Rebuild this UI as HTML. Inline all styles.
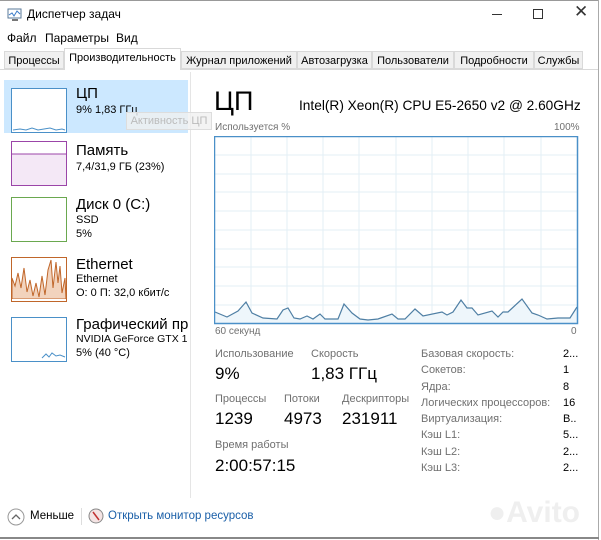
<!DOCTYPE html><html><head><meta charset="utf-8"><style>
body{margin:0;width:601px;height:540px;overflow:hidden;background:#fff;font-family:"Segoe UI","Liberation Sans","DejaVu Sans",sans-serif;color:#000;position:relative}
.a{position:absolute;white-space:nowrap}
.t{position:absolute;top:51px;height:18px;border:1px solid #d9d9d9;background:#f0f0f0;font-size:11px;line-height:18px;text-align:center;box-sizing:border-box}
.g{color:#707070;font-size:11px}
.s{font-size:11px}
.th{position:absolute;left:11px;width:56px;height:43px;background:#fff}
</style></head><body>
<div class="a" style="left:0;top:0;width:598px;height:1px;background:#999"></div>
<div class="a" style="left:598px;top:0;width:1px;height:540px;background:#aaa"></div>
<div class="a" style="left:0;top:537px;width:599px;height:2px;background:#888"></div>
<svg class="a" style="left:7px;top:8px" width="16" height="14"><rect x="1" y="1" width="13" height="9" fill="#fff" stroke="#5a7a9a"/><polyline points="2,7 5,5 7,8 10,3 13,6" fill="none" stroke="#3a7bc8"/><rect x="5" y="11" width="6" height="2" fill="#777"/></svg>
<div class="a" style="left:27px;top:7px;font-size:12px">Диспетчер задач</div>
<div class="a" style="left:492px;top:14px;width:10px;height:1px;background:#333"></div>
<div class="a" style="left:533px;top:9px;width:8px;height:8px;border:1px solid #333"></div>
<div class="a" style="left:574px;top:2px;font-size:17px;color:#333">✕</div>
<div class="a s" style="left:7px;top:31px;font-size:12px">Файл</div>
<div class="a s" style="left:45px;top:31px;font-size:12px">Параметры</div>
<div class="a s" style="left:116px;top:31px;font-size:12px">Вид</div>
<div class="a" style="left:0;top:69px;width:598px;height:1px;background:#d9d9d9"></div>
<div class="t" style="left:4px;width:60px">Процессы</div>
<div class="t" style="left:64px;width:117px;top:48px;height:22px;background:#fff;border-bottom:none">Производительность</div>
<div class="t" style="left:181px;width:116px">Журнал приложений</div>
<div class="t" style="left:297px;width:75px">Автозагрузка</div>
<div class="t" style="left:372px;width:82px">Пользователи</div>
<div class="t" style="left:454px;width:80px">Подробности</div>
<div class="t" style="left:534px;width:49px">Службы</div>
<div class="a" style="left:190px;top:72px;width:1px;height:426px;background:#e5e5e5"></div>
<div class="a" style="left:4px;top:80px;width:184px;height:53px;background:#cce8ff"></div>
<div class="th" style="top:88px;border:1px solid #4a90c8;width:54px"><svg width="54" height="43"><polyline points="1,41 8,40 14,41 20,39 26,41 32,40 38,39 44,41 50,40 53,41" fill="none" stroke="#4a90c8"/></svg></div>
<div class="a" style="left:76px;top:85px;font-size:15px">ЦП</div>
<div class="a s" style="left:76px;top:104px">9% 1,83 ГГц</div>
<div class="a" style="left:126px;top:112px;width:84px;height:16px;background:rgba(240,240,240,.8);border:1px solid #ddd;color:#bbb;font-size:11px;line-height:16px;text-align:center">Активность ЦП</div>
<div class="th" style="top:141px;border:1px solid #9b45a8;width:54px"><svg width="54" height="43"><rect x="0" y="12" width="54" height="31" fill="#f4e8f6"/><line x1="0" y1="12" x2="54" y2="12" stroke="#9b45a8"/></svg></div>
<div class="a" style="left:76px;top:142px;font-size:15px">Память</div>
<div class="a s" style="left:76px;top:161px">7,4/31,9 ГБ (23%)</div>
<div class="th" style="top:197px;border:1px solid #6aa84f;width:54px"></div>
<div class="a" style="left:76px;top:196px;font-size:15px">Диск 0 (C:)</div>
<div class="a s" style="left:76px;top:214px">SSD</div>
<div class="a s" style="left:76px;top:228px">5%</div>
<div class="th" style="top:257px;border:1px solid #c0662a;width:54px"><svg width="54" height="41"><polygon points="0,41 0,20 3,28 6,15 9,30 12,10 15,34 18,22 21,38 24,25 27,39 30,18 33,37 36,12 39,2 41,30 44,4 46,25 48,8 50,35 53,20 54,41" fill="#f2d3bd" stroke="#c0662a"/></svg></div>
<div class="a" style="left:76px;top:256px;font-size:15px">Ethernet</div>
<div class="a s" style="left:76px;top:273px">Ethernet</div>
<div class="a s" style="left:76px;top:287px">О: 0 П: 32,0 кбит/с</div>
<div class="th" style="top:317px;border:1px solid #4a90c8;width:54px"><svg width="54" height="41"><polyline points="30,40 34,36 37,39 40,35 44,38 48,37 53,39" fill="none" stroke="#4a90c8"/></svg></div>
<div class="a" style="left:76px;top:316px;font-size:15px;width:112px;overflow:hidden">Графический про</div>
<div class="a" style="left:76px;top:333px;font-size:10.5px;width:112px;overflow:hidden">NVIDIA GeForce GTX 166</div>
<div class="a s" style="left:76px;top:347px">5% (40 °C)</div>
<div class="a" style="left:214px;top:86px;font-size:27px;line-height:30px">ЦП</div>
<div class="a" style="left:299px;top:98px;font-size:13.7px">Intel(R) Xeon(R) CPU E5-2650 v2 @ 2.60GHz</div>
<div class="a g" style="left:215px;top:122px;font-size:10px">Используется %</div>
<div class="a g" style="left:554px;top:122px;font-size:10px">100%</div>
<svg class="a" style="left:214px;top:136px" width="365" height="189">
<g stroke="#e3eff6" stroke-width="1">
<line x1="37" y1="0" x2="37" y2="188"/><line x1="73" y1="0" x2="73" y2="188"/><line x1="109" y1="0" x2="109" y2="188"/><line x1="145" y1="0" x2="145" y2="188"/><line x1="182" y1="0" x2="182" y2="188"/><line x1="218" y1="0" x2="218" y2="188"/><line x1="254" y1="0" x2="254" y2="188"/><line x1="290" y1="0" x2="290" y2="188"/><line x1="327" y1="0" x2="327" y2="188"/>
<line x1="0" y1="19" x2="364" y2="19"/><line x1="0" y1="38" x2="364" y2="38"/><line x1="0" y1="56" x2="364" y2="56"/><line x1="0" y1="75" x2="364" y2="75"/><line x1="0" y1="94" x2="364" y2="94"/><line x1="0" y1="113" x2="364" y2="113"/><line x1="0" y1="131" x2="364" y2="131"/><line x1="0" y1="150" x2="364" y2="150"/><line x1="0" y1="169" x2="364" y2="169"/>
</g>
<g transform="translate(-214,-136)">
<polygon points="215,323 215,312 227,317 238,311 246,302 252,313 263,318 277,319 283,310 288,308 294,318 300,319 307,316 313,319 320,314 325,319 338,319 344,304 352,313 360,319 368,320 378,319 392,314 398,319 405,319 415,309 423,316 442,312 447,315 453,312 461,300 467,308 472,308 478,315 492,311 498,317 503,312 508,312 522,299 532,313 538,315 547,319 558,318 570,318 577,307 577,323" fill="#eef6fb" stroke="none"/>
<polyline points="215,312 227,317 238,311 246,302 252,313 263,318 277,319 283,310 288,308 294,318 300,319 307,316 313,319 320,314 325,319 338,319 344,304 352,313 360,319 368,320 378,319 392,314 398,319 405,319 415,309 423,316 442,312 447,315 453,312 461,300 467,308 472,308 478,315 492,311 498,317 503,312 508,312 522,299 532,313 538,315 547,319 558,318 570,318 577,307" fill="none" stroke="#4f7fa4" stroke-width="1.2"/>
</g>
<rect x="0.5" y="0.5" width="363" height="187" fill="none" stroke="#4a90c8" stroke-width="1.5"/>
</svg>
<div class="a g" style="left:215px;top:326px;font-size:10px">60 секунд</div>
<div class="a g" style="left:571px;top:326px;font-size:10px">0</div>
<div class="a g" style="left:215px;top:348px">Использование</div>
<div class="a g" style="left:311px;top:348px">Скорость</div>
<div class="a" style="left:215px;top:364px;font-size:17px">9%</div>
<div class="a" style="left:311px;top:364px;font-size:17px">1,83 ГГц</div>
<div class="a g" style="left:215px;top:393px">Процессы</div>
<div class="a g" style="left:284px;top:393px">Потоки</div>
<div class="a g" style="left:342px;top:393px">Дескрипторы</div>
<div class="a" style="left:215px;top:409px;font-size:17px">1239</div>
<div class="a" style="left:284px;top:409px;font-size:17px">4973</div>
<div class="a" style="left:342px;top:409px;font-size:17px">231911</div>
<div class="a g" style="left:215px;top:439px">Время работы</div>
<div class="a" style="left:215px;top:456px;font-size:17px">2:00:57:15</div>
<div class="a g" style="left:421px;top:346px;line-height:16.3px">Базовая скорость:<br>Сокетов:<br>Ядра:<br>Логических процессоров:<br>Виртуализация:<br>Кэш L1:<br>Кэш L2:<br>Кэш L3:</div>
<div class="a s" style="left:563px;top:346px;line-height:16.3px">2...<br>1<br>8<br>16<br>В..<br>5...<br>2...<br>2...</div>
<svg class="a" style="left:7px;top:508px" width="18" height="18"><circle cx="9" cy="9" r="8" fill="#fff" stroke="#999"/><polyline points="5,11 9,7 13,11" fill="none" stroke="#666" stroke-width="1.3"/></svg>
<div class="a" style="left:30px;top:510px;font-size:11.5px">Меньше</div>
<div class="a" style="left:81px;top:508px;width:1px;height:17px;background:#ddd"></div>
<svg class="a" style="left:88px;top:508px" width="16" height="16"><circle cx="8" cy="8" r="7" fill="#f4e4e4" stroke="#888"/><line x1="5" y1="4" x2="11" y2="12" stroke="#c03030" stroke-width="1.5"/></svg>
<div class="a" style="left:108px;top:510px;font-size:11.5px;color:#1a5fa8">Открыть монитор ресурсов</div>
<div class="a" style="left:488px;top:496px;font-size:30px;color:#efefef;font-weight:bold">●Avito</div>
</body></html>
